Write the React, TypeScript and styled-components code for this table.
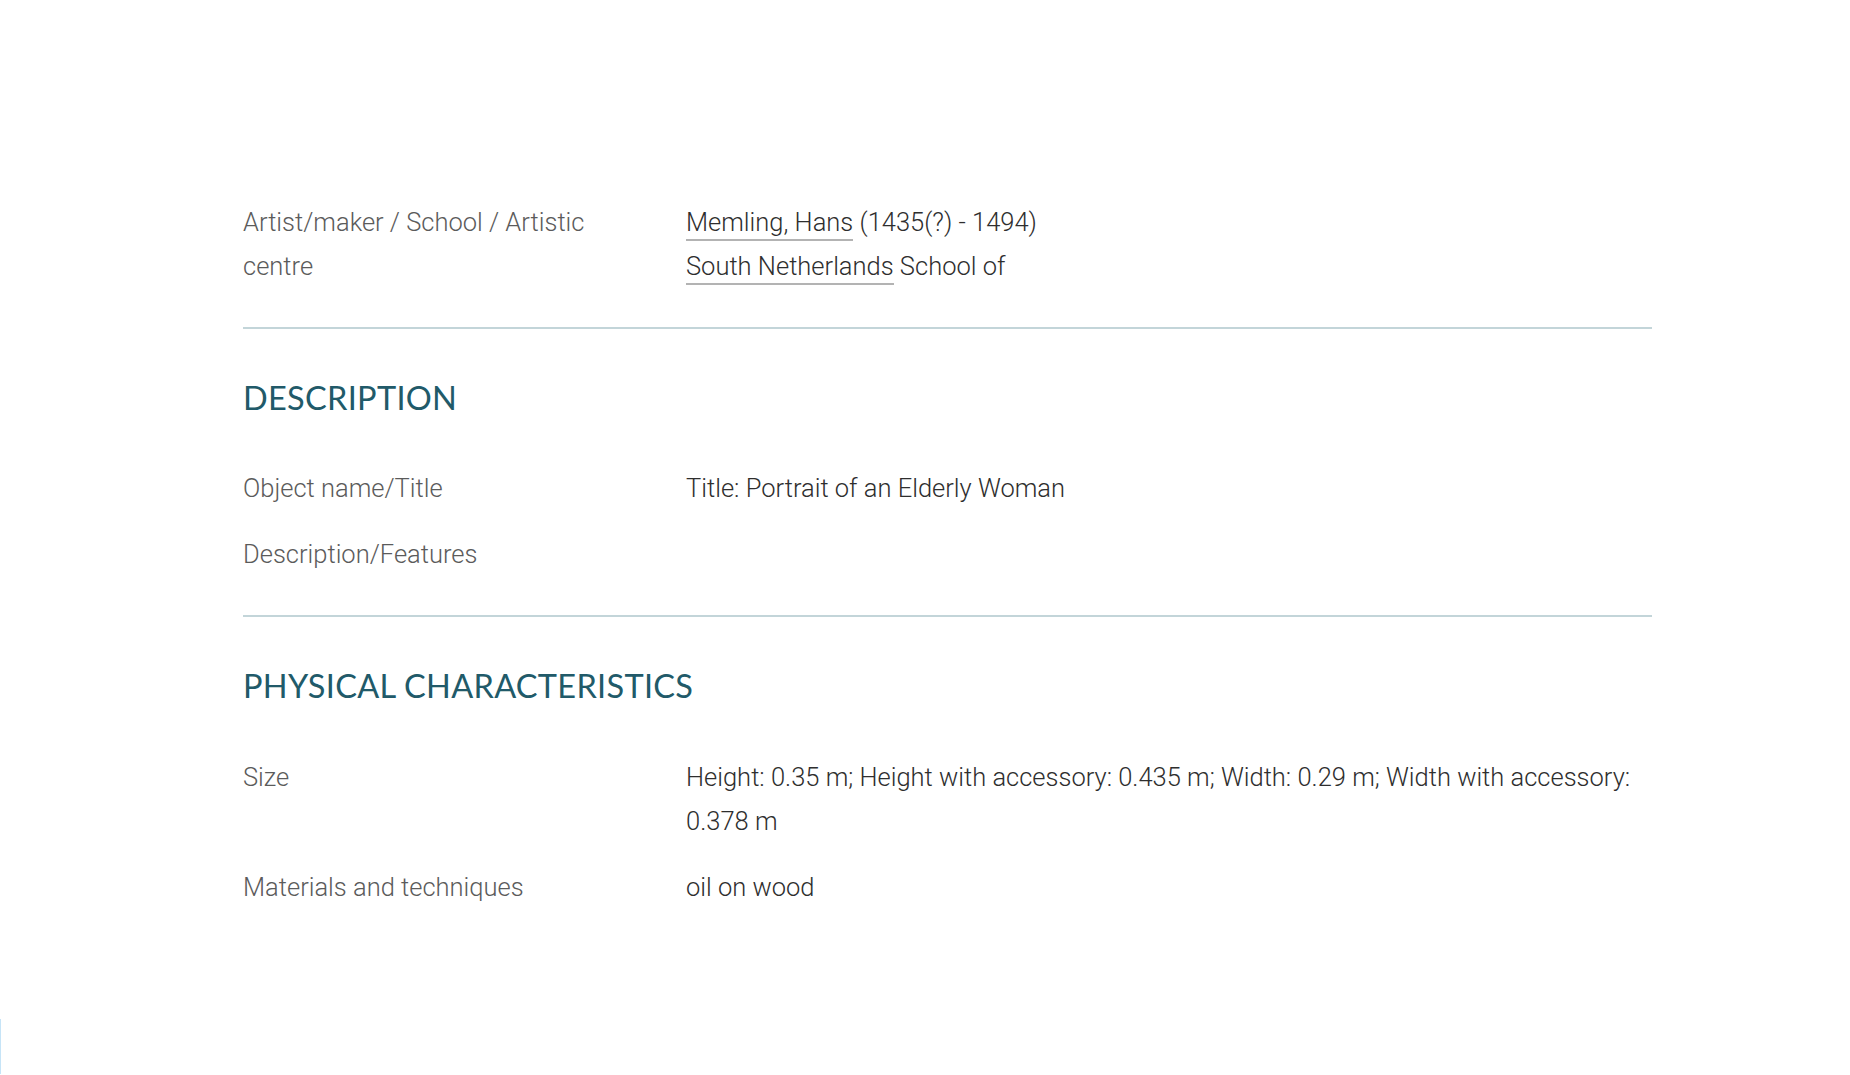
import React from "react";
import styled, { createGlobalStyle } from "styled-components";

const GlobalStyle = createGlobalStyle`
  html, body { margin: 0; padding: 0; background: #ffffff; }
  body { font-family: Roboto, "Liberation Sans", Arial, sans-serif; }
`;

const Page = styled.main`
  padding: 200px 198px 120px 243px;
  width: 1409px;
`;

const Section = styled.section<{ $first?: boolean; $last?: boolean }>`
  padding-top: ${(p) => (p.$first ? "0" : "50px")};
  padding-bottom: ${(p) => (p.$last ? "0" : "39px")};
  border-bottom: ${(p) => (p.$last ? "none" : "2px solid #c3d5d9")};
`;

const Heading = styled.h2`
  margin: 0 0 49px;
  font-family: Lato, "Open Sans", sans-serif;
  font-weight: 400;
  font-size: 32.5px;
  line-height: 38.4px;
  letter-spacing: 0.3px;
  color: #215a69;
  text-transform: uppercase;
`;

const Rows = styled.dl`
  margin: 0;
  display: grid;
  grid-template-columns: 400px 1fr;
  column-gap: 43px;
  row-gap: 22px;
`;

const Label = styled.dt`
  margin: 0;
  font-family: Roboto, "Liberation Sans", sans-serif;
  font-weight: 300;
  font-size: 25.5px;
  line-height: 44px;
  color: #5b5b5b;
`;

const Value = styled.dd`
  margin: 0;
  font-family: Roboto, "Liberation Sans", sans-serif;
  font-weight: 300;
  font-size: 25.5px;
  line-height: 44px;
  color: #2e2e2e;
`;

const Line = styled.div``;

const Link = styled.a`
  color: inherit;
  text-decoration: none;
  padding-bottom: 2px;
  border-bottom: 2px solid #b3b3b3;
`;

const SideMark = styled.div`
  position: fixed;
  left: 0;
  bottom: 1px;
  width: 1px;
  height: 55px;
  background: #c6e4f7;
`;

export default function App() {
  return (
    <>
      <GlobalStyle />
      <Page>
        <Section $first>
          <Rows>
            <Label>Artist/maker / School / Artistic centre</Label>
            <Value>
              <Line>
                <Link href="#">Memling, Hans</Link> (1435(?) - 1494)
              </Line>
              <Line>
                <Link href="#">South Netherlands</Link> School of
              </Line>
            </Value>
          </Rows>
        </Section>
        <Section>
          <Heading>Description</Heading>
          <Rows>
            <Label>Object name/Title</Label>
            <Value>Title: Portrait of an Elderly Woman</Value>
            <Label>Description/Features</Label>
            <Value></Value>
          </Rows>
        </Section>
        <Section $last>
          <Heading>Physical characteristics</Heading>
          <Rows>
            <Label>Size</Label>
            <Value>
              Height: 0.35 m; Height with accessory: 0.435 m; Width: 0.29 m; Width with accessory: 0.378 m
            </Value>
            <Label>Materials and techniques</Label>
            <Value>oil on wood</Value>
          </Rows>
        </Section>
      </Page>
      <SideMark />
    </>
  );
}
